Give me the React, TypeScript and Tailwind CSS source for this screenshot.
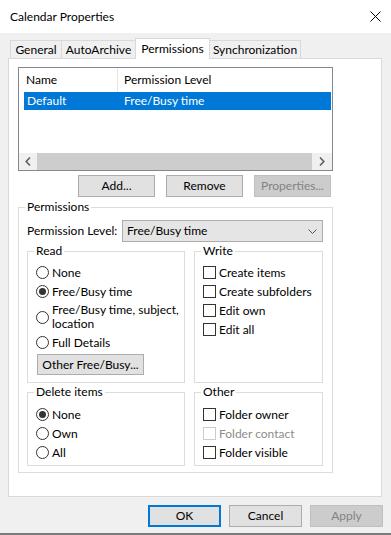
import React from "react";

function Radio({ checked, children, tall }: { checked?: boolean; children: React.ReactNode; tall?: boolean }) {
  return (
    <div className={tall ? "flex items-center h-[32px]" : "flex items-center h-[19px]"}>
      <span className="w-[13px] h-[13px] rounded-full border border-[#333333] bg-white flex items-center justify-center shrink-0">
        {checked ? <span className="w-[7px] h-[7px] rounded-full bg-[#333333]" /> : null}
      </span>
      <span className={tall ? "ml-[3px] leading-[14px]" : "ml-[3px]"}>{children}</span>
    </div>
  );
}

function Check({ children, disabled }: { children: React.ReactNode; disabled?: boolean }) {
  return (
    <div className="flex items-center h-[19px]">
      <span
        className={
          disabled
            ? "w-[13px] h-[13px] border border-[#cccccc] bg-white shrink-0"
            : "w-[13px] h-[13px] border border-[#333333] bg-white shrink-0"
        }
      />
      <span className={disabled ? "ml-[3px] text-[#8c8c8c]" : "ml-[3px]"}>{children}</span>
    </div>
  );
}

function Group({ title, className, children }: { title: string; className: string; children?: React.ReactNode }) {
  return (
    <fieldset className={"border border-[#dcdcdc] m-0 " + className}>
      <legend className="ml-[-2px] px-[2px] leading-[16px] h-[16px]">{title}</legend>
      {children}
    </fieldset>
  );
}

function Btn({ children, className, disabled }: { children: React.ReactNode; className: string; disabled?: boolean }) {
  return (
    <div
      className={
        (disabled
          ? "bg-[#cccccc] border border-[#bfbfbf] text-[#838383] "
          : "bg-[#e1e1e1] border border-[#adadad] ") +
        "flex items-center justify-center " +
        className
      }
    >
      {children}
    </div>
  );
}

function Chevron({ dir }: { dir: "l" | "r" }) {
  return (
    <svg width="6" height="9" viewBox="0 0 6 9">
      <path
        d={dir === "l" ? "M5 0.5 L1.2 4.5 L5 8.5" : "M1 0.5 L4.8 4.5 L1 8.5"}
        fill="none"
        stroke="#606060"
        strokeWidth="1.6"
      />
    </svg>
  );
}

export default function App() {
  return (
    <div className="w-[391px] h-[535px] bg-[#f0f0f0] text-[12px] text-black font-[family-name:Lato,sans-serif] flex flex-col border-b-2 border-[#7a7a7a] overflow-hidden">
      {/* Title bar */}
      <div className="h-[33px] bg-white flex items-center pl-[10px] shrink-0">
        <span>Calendar Properties</span>
        <svg className="ml-auto mr-[10px]" width="11" height="11" viewBox="0 0 11 11">
          <path d="M0.5 0.5 L10.5 10.5 M10.5 0.5 L0.5 10.5" stroke="#000" strokeWidth="1" />
        </svg>
      </div>

      {/* Tabs */}
      <div className="mt-[5px] h-[20px] pl-[10px] flex items-end shrink-0">
        <div className="w-[51px] h-[18px] border-l border-t border-[#d9d9d9] flex items-center justify-center">General</div>
        <div className="w-[74px] h-[18px] border-l border-t border-[#d9d9d9] flex items-center justify-center">AutoArchive</div>
        <div className="relative z-10 -mb-px w-[75px] h-[21px] bg-white border-l border-t border-r border-[#d9d9d9] flex items-center justify-center">
          Permissions
        </div>
        <div className="w-[91px] h-[18px] border-t border-r border-[#d9d9d9] flex items-center justify-center">Synchronization</div>
      </div>

      {/* Panel */}
      <div className="ml-[8px] w-[374px] h-[439px] bg-white border border-[#d9d9d9] pt-[8px] pl-[9px] flex flex-col shrink-0">
        {/* List */}
        <div className="w-[315px] h-[104px] border border-[#828790] flex flex-col shrink-0">
          <div className="h-[24px] flex shrink-0">
            <div className="w-[99px] border-r border-[#e5e5e5] pl-[7px] flex items-center">Name</div>
            <div className="pl-[6px] flex items-center">Permission Level</div>
          </div>
          <div className="ml-[5px] w-[307px] h-[18px] bg-[#0078d7] text-white flex items-center shrink-0">
            <div className="w-[100px] pl-[3px]">Default</div>
            <div>Free/Busy time</div>
          </div>
          <div className="flex-1" />
          <div className="h-[17px] bg-[#f0f0f0] flex shrink-0">
            <div className="w-[18px] flex items-center justify-center">
              <Chevron dir="l" />
            </div>
            <div className="flex-1 bg-[#cdcdcd]" />
            <div className="w-[20px] flex items-center justify-center">
              <Chevron dir="r" />
            </div>
          </div>
        </div>

        {/* Buttons */}
        <div className="mt-[4px] ml-[60px] flex gap-[11px] shrink-0">
          <Btn className="w-[77px] h-[22px]">Add...</Btn>
          <Btn className="w-[77px] h-[22px]">Remove</Btn>
          <Btn className="w-[77px] h-[22px]" disabled>
            Properties...
          </Btn>
        </div>

        {/* Permissions group */}
        <Group title="Permissions" className="mt-[2px] w-[315px] h-[274px] pl-[8px] shrink-0">
          <div className="mt-[5px] flex items-center h-[22px]">
            <div className="w-[95px]">Permission Level:</div>
            <div className="w-[201px] h-[22px] bg-[#e5e5e5] border border-[#adadad] flex items-center pl-[4px] pr-[5px]">
              <span>Free/Busy time</span>
              <svg className="ml-auto" width="9" height="5" viewBox="0 0 9 5">
                <path d="M0.5 0.5 L4.5 4.5 L8.5 0.5" fill="none" stroke="#555" strokeWidth="1" />
              </svg>
            </div>
          </div>

          <div className="mt-[1px] flex gap-[9px]">
            <Group title="Read" className="w-[158px] h-[140px] pl-[8px]">
              <div className="mt-[4px]">
                <Radio>None</Radio>
                <Radio checked>Free/Busy time</Radio>
                <Radio tall>
                  Free/Busy time, subject,
                  <br />
                  location
                </Radio>
                <Radio>Full Details</Radio>
              </div>
              <Btn className="mt-[2px] ml-[1px] w-[107px] h-[21px]">Other Free/Busy...</Btn>
            </Group>
            <Group title="Write" className="w-[129px] h-[140px] pl-[8px]">
              <div className="mt-[4px]">
                <Check>Create items</Check>
                <Check>Create subfolders</Check>
                <Check>Edit own</Check>
                <Check>Edit all</Check>
              </div>
            </Group>
          </div>

          <div className="mt-[1px] flex gap-[9px]">
            <Group title="Delete items" className="w-[158px] h-[82px] pl-[8px]">
              <div className="mt-[5px]">
                <Radio checked>None</Radio>
                <Radio>Own</Radio>
                <Radio>All</Radio>
              </div>
            </Group>
            <Group title="Other" className="w-[129px] h-[82px] pl-[8px]">
              <div className="mt-[5px]">
                <Check>Folder owner</Check>
                <Check disabled>Folder contact</Check>
                <Check>Folder visible</Check>
              </div>
            </Group>
          </div>
        </Group>
      </div>

      {/* Dialog buttons */}
      <div className="mt-[8px] pr-[8px] flex justify-end gap-[8px] shrink-0">
        <div className="w-[73px] h-[22px] bg-[#e1e1e1] border-2 border-[#0078d7] flex items-center justify-center">OK</div>
        <Btn className="w-[73px] h-[22px]">Cancel</Btn>
        <Btn className="w-[73px] h-[22px]" disabled>
          Apply
        </Btn>
      </div>
    </div>
  );
}
